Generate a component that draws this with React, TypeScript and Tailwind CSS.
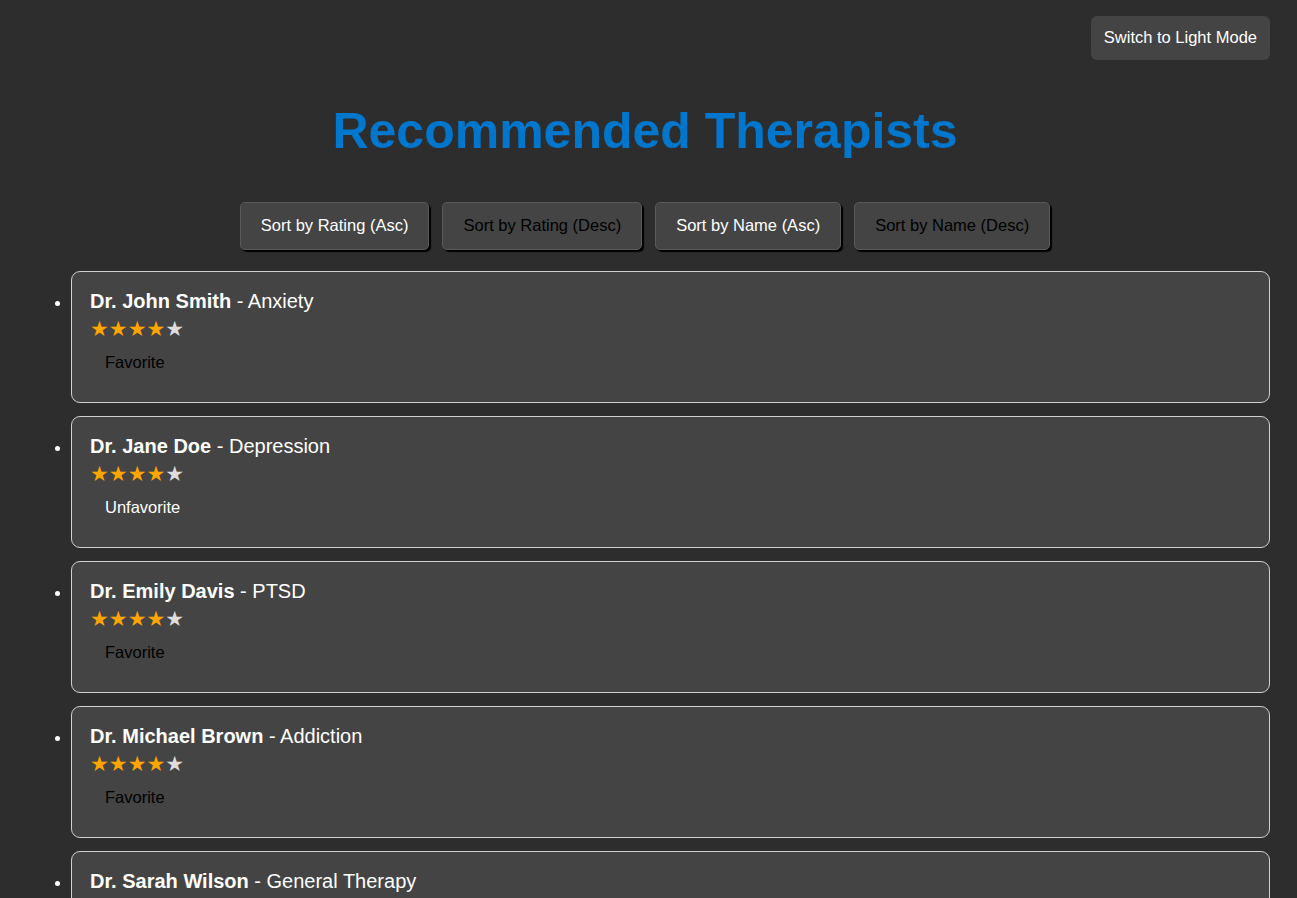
import { useState } from 'react';

interface Therapist {
  id: number;
  name: string;
  specialty: string;
  rating: number;
  favorite: boolean;
}

const THERAPISTS: Therapist[] = [
  { id: 1, name: 'Dr. John Smith', specialty: 'Anxiety', rating: 4, favorite: false },
  { id: 2, name: 'Dr. Jane Doe', specialty: 'Depression', rating: 4, favorite: true },
  { id: 3, name: 'Dr. Emily Davis', specialty: 'PTSD', rating: 4, favorite: false },
  { id: 4, name: 'Dr. Michael Brown', specialty: 'Addiction', rating: 4, favorite: false },
  { id: 5, name: 'Dr. Sarah Wilson', specialty: 'General Therapy', rating: 4, favorite: false },
  { id: 6, name: 'Dr. David Lee', specialty: 'Relationships', rating: 4, favorite: false },
];

// Sort buttons: the first of each pair has white text, the second black
const SORT_BUTTONS = [
  { label: 'Sort by Rating (Asc)', light: true },
  { label: 'Sort by Rating (Desc)', light: false },
  { label: 'Sort by Name (Asc)', light: true },
  { label: 'Sort by Name (Desc)', light: false },
];

function Stars({ rating }: { rating: number }) {
  return (
    <div className="mt-[4px] h-[24px] text-[21px] leading-[24px] font-['DejaVu_Sans',sans-serif]">
      {[1, 2, 3, 4, 5].map((i) => (
        <span key={i} className={i <= rating ? 'text-[#ffa500]' : 'text-[#dddddd]'}>
          ★
        </span>
      ))}
    </div>
  );
}

function TherapistCard({ therapist, onToggle }: { therapist: Therapist; onToggle: () => void }) {
  return (
    <li className="mb-[13px]">
      <div className="rounded-[9px] border border-[#d0d0d0] bg-[#444444] px-[18px] pt-[17px] pb-[20px]">
        <div className="text-[20px] leading-[24px] text-white">
          <span className="font-bold">{therapist.name}</span> - {therapist.specialty}
        </div>
        <Stars rating={therapist.rating} />
        <button
          onClick={onToggle}
          className={
            'mt-[2px] bg-transparent px-[15px] pt-[10px] pb-[11px] text-[16.5px] leading-[18px] ' +
            (therapist.favorite ? 'text-white' : 'text-black')
          }
        >
          {therapist.favorite ? 'Unfavorite' : 'Favorite'}
        </button>
      </div>
    </li>
  );
}

export default function App() {
  const [therapists, setTherapists] = useState(THERAPISTS);

  const toggle = (id: number) =>
    setTherapists((list) => list.map((t) => (t.id === id ? { ...t, favorite: !t.favorite } : t)));

  return (
    <div className="min-h-screen bg-[#2d2d2d] pr-[7px] pt-[16px] font-['Liberation_Sans',Arial,sans-serif]">
      {/* Theme toggle */}
      <div className="flex justify-end pr-[20px]">
        <button className="h-[44px] rounded-[6px] bg-[#444444] px-[13px] pb-[2px] text-[16.5px] text-white">
          Switch to Light Mode
        </button>
      </div>

      {/* Title */}
      <h1 className="mt-[43px] text-center text-[50px] leading-[56px] font-bold text-[#0077cc]">
        Recommended Therapists
      </h1>

      {/* Sort controls */}
      <div className="mt-[43px] flex justify-center gap-[13px]">
        {SORT_BUTTONS.map((b) => (
          <button
            key={b.label}
            className={
              'h-[48px] rounded-[5px] border border-[#5a5a5a] bg-[#444444] px-[20px] pb-[2px] text-[16.5px] shadow-[2px_2px_1px_#000] ' +
              (b.light ? 'text-white' : 'text-black')
            }
          >
            {b.label}
          </button>
        ))}
      </div>

      {/* Therapist list */}
      <ul className="mt-[21px] list-disc pl-[71px] pr-[20px] text-white">
        {therapists.map((t) => (
          <TherapistCard key={t.id} therapist={t} onToggle={() => toggle(t.id)} />
        ))}
      </ul>
    </div>
  );
}
